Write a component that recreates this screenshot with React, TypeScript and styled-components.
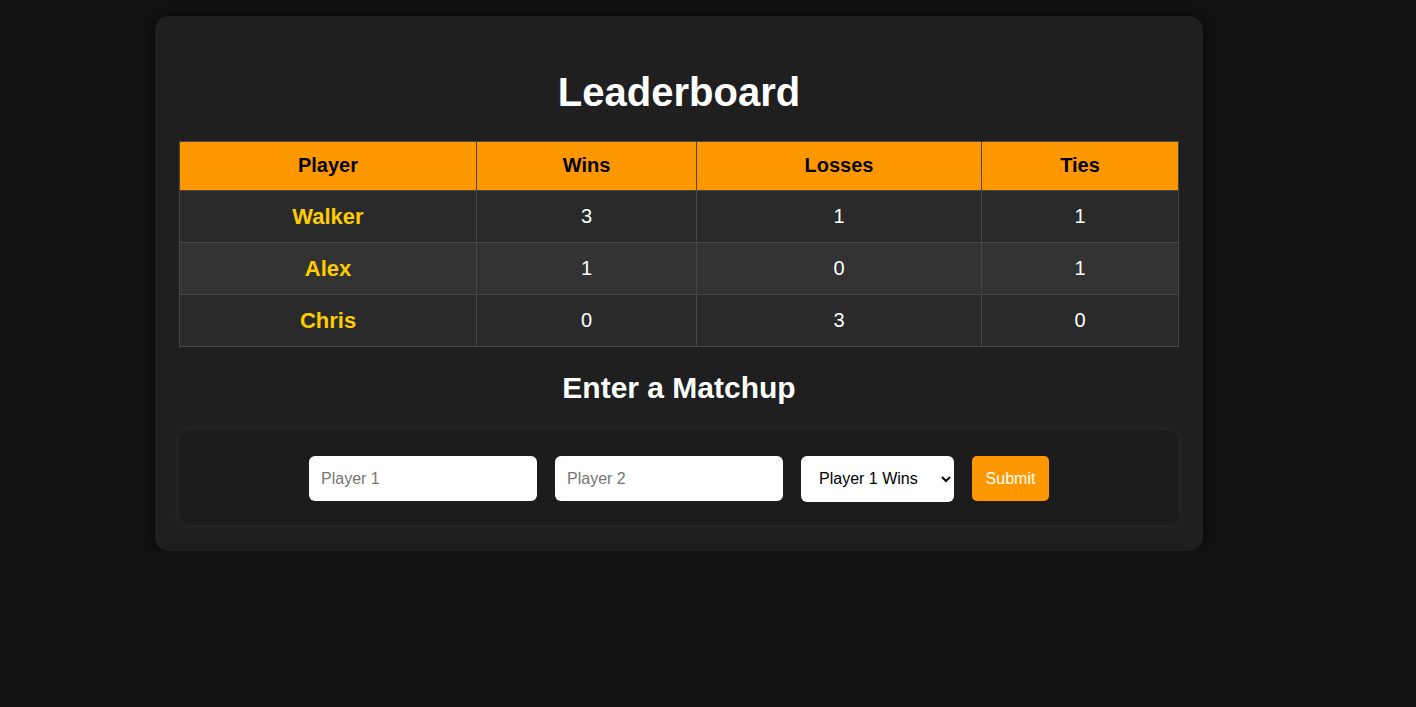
import React from "react";
import styled, { createGlobalStyle } from "styled-components";

const Global = createGlobalStyle`
  html, body { margin: 0; padding: 0; background: #121212; }
  body { font-family: "Liberation Sans", Arial, sans-serif; color: #fff; }
  * { box-sizing: border-box; }
`;

const Page = styled.div`
  padding: 16px 0 0 155px;
`;

const Card = styled.div`
  width: 1048px;
  background: #1f1f1f;
  border-radius: 14px;
  box-shadow: 0 0 20px rgba(0, 0, 0, 0.6);
  padding: 24px 24px 26px;
  display: flex;
  flex-direction: column;
  align-items: stretch;
`;

const Title = styled.h1`
  margin: 29px 0 26px;
  font-size: 40px;
  line-height: 46px;
  font-weight: bold;
  text-align: center;
  color: #fff;
`;

const Table = styled.table`
  width: 999px;
  border-collapse: collapse;
  table-layout: fixed;
`;

const Th = styled.th<{ $w: number }>`
  width: ${(p) => p.$w}px;
  height: 49px;
  background: #ff9800;
  color: #000;
  font-size: 20px;
  font-weight: bold;
  border: 1px solid #474747;
  text-align: center;
  padding: 0 0 2px;
`;

const Tr = styled.tr<{ $alt?: boolean }>`
  background: ${(p) => (p.$alt ? "#333333" : "#2a2a2a")};
`;

const Td = styled.td<{ $name?: boolean }>`
  height: 52px;
  border: 1px solid #474747;
  text-align: center;
  padding: 0;
  font-size: ${(p) => (p.$name ? "22px" : "20px")};
  font-weight: ${(p) => (p.$name ? "bold" : "normal")};
  color: ${(p) => (p.$name ? "#ffcc00" : "#ffffff")};
`;

const SubTitle = styled.h2`
  margin: 24px 0 25px;
  font-size: 30px;
  line-height: 34px;
  font-weight: bold;
  text-align: center;
  color: #fff;
`;

const FormBox = styled.form`
  background: #1c1c1c;
  border-radius: 12px;
  box-shadow: 0 0 10px rgba(255, 255, 255, 0.06);
  height: 95px;
  padding-top: 2px;
  display: flex;
  justify-content: center;
  align-items: center;
  gap: 18px;
`;

const Input = styled.input`
  width: 228px;
  height: 45px;
  border: none;
  border-radius: 6px;
  background: #fff;
  padding: 0 12px;
  font-family: "Liberation Sans", Arial, sans-serif;
  font-size: 16px;
  color: #000;
  outline: none;
  &::placeholder { color: #767676; }
`;

const Select = styled.select`
  width: 153px;
  height: 46px;
  border: none;
  border-radius: 6px;
  background: #fff;
  padding: 0 0 0 14px;
  font-family: "Liberation Sans", Arial, sans-serif;
  font-size: 16px;
  color: #000;
`;

const Button = styled.button`
  width: 77px;
  height: 45px;
  border: none;
  border-radius: 5px;
  background: #ff9800;
  color: #fff;
  font-family: "Liberation Sans", Arial, sans-serif;
  font-size: 16px;
  cursor: pointer;
`;

const rows = [
  { name: "Walker", w: 3, l: 1, t: 1 },
  { name: "Alex", w: 1, l: 0, t: 1 },
  { name: "Chris", w: 0, l: 3, t: 0 },
];

export default function App() {
  return (
    <>
      <Global />
      <Page>
        <Card>
          <Title>Leaderboard</Title>
          <Table>
            <thead>
              <tr>
                <Th $w={297}>Player</Th>
                <Th $w={220}>Wins</Th>
                <Th $w={285}>Losses</Th>
                <Th $w={197}>Ties</Th>
              </tr>
            </thead>
            <tbody>
              {rows.map((r, i) => (
                <Tr key={r.name} $alt={i % 2 === 1}>
                  <Td $name>{r.name}</Td>
                  <Td>{r.w}</Td>
                  <Td>{r.l}</Td>
                  <Td>{r.t}</Td>
                </Tr>
              ))}
            </tbody>
          </Table>
          <SubTitle>Enter a Matchup</SubTitle>
          <FormBox onSubmit={(e) => e.preventDefault()}>
            <Input placeholder="Player 1" />
            <Input placeholder="Player 2" />
            <Select defaultValue="p1">
              <option value="p1">Player 1 Wins</option>
              <option value="p2">Player 2 Wins</option>
              <option value="tie">Tie</option>
            </Select>
            <Button type="submit">Submit</Button>
          </FormBox>
        </Card>
      </Page>
    </>
  );
}
